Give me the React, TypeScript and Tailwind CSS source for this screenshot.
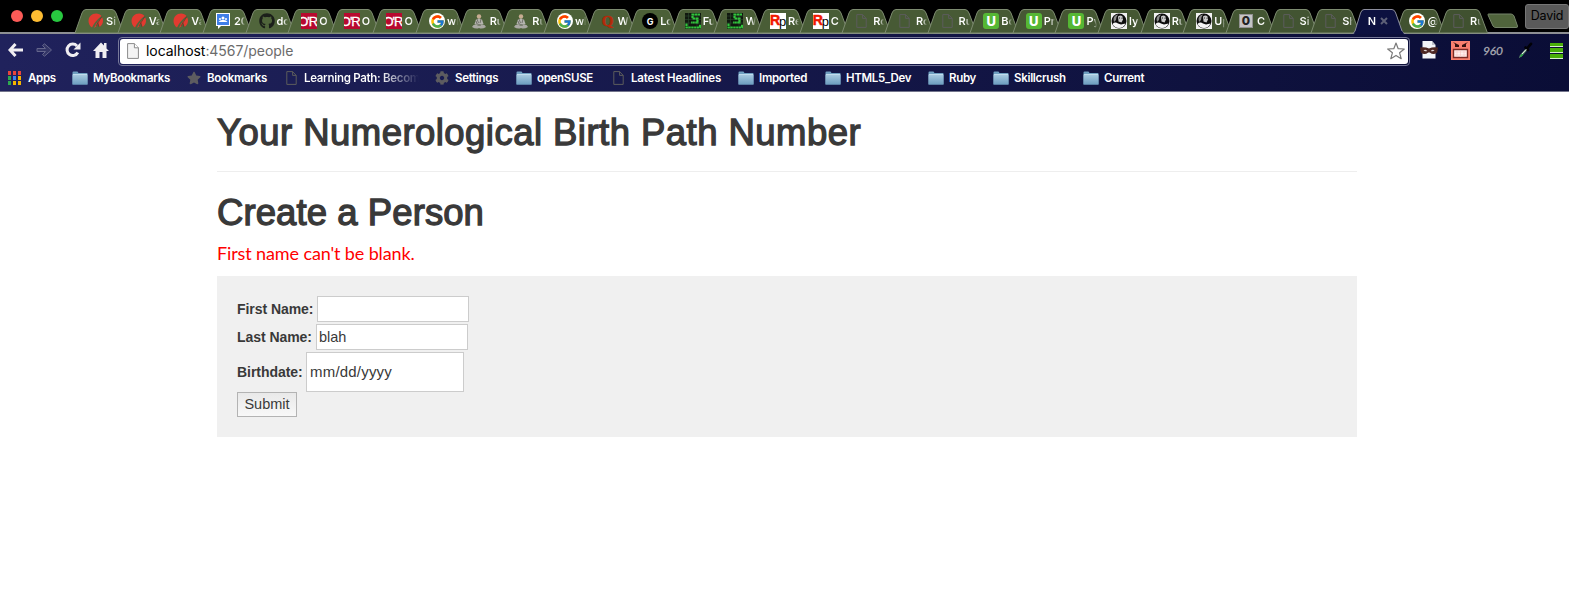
import type { ReactNode } from "react";
import { FcGoogle } from "react-icons/fc";
import { FaGithub, FaStar, FaCog } from "react-icons/fa";

function PageIcon({ light = false }: { light?: boolean }) {
  return light ? (
    <svg width="12" height="16" viewBox="0 0 12 16" className="block">
      <path d="M.6.6H7.4L11.4 4.8V15.4H.6Z" fill="#f4f4f4" stroke="#8a8a8a" />
      <path d="M7.4.6V4.8H11.4" fill="#fff" stroke="#8a8a8a" />
    </svg>
  ) : (
    <svg width="11" height="14" viewBox="0 0 11 14" className="block">
      <path d="M.8.6H6.6L10.2 4.4V13.4H.8ZM6.6.6V4.4H10.2" fill="none" stroke="#5c5c5c" />
    </svg>
  );
}

function Rails() {
  return (
    <svg width="16" height="16" viewBox="0 0 16 16" className="block">
      <path d="M4 14.5C-1.5 10.500 0 3 5 1C8.500-.3 12 .7 13.500 3C9.500 6 6 10 4 14.500Z" fill="#e23b30" />
      <path d="M6 15C8 10 11 6.500 14.300 4.500C16 8.500 14.500 12 11.500 14C11 11.500 10.500 10.500 10 10C9.500 12 8 14 6 15Z" fill="#e23b30" />
      <path d="M8 13L13.800 3.500M9.500 9.500L11 14" stroke="#6b3a28" strokeWidth=".8" fill="none" />
    </svg>
  );
}

function Classroom() {
  return (
    <svg width="14" height="16" viewBox="0 0 14 16" className="block">
      <path d="M0 0H14V13H5L2 16V13H0Z" fill="#fff" />
      <path d="M1 1H13V12H1Z" fill="#3f7fe8" />
      <circle cx="7" cy="5" r="1.500" fill="#fff" />
      <circle cx="4" cy="6" r="1" fill="#fff" />
      <circle cx="10" cy="6" r="1" fill="#fff" />
      <path d="M2.500 9Q4 6.500 7 7Q10 6.500 11.500 9Z" fill="#fff" />
    </svg>
  );
}

function OReilly() {
  return (
    <div className="flex h-4 w-4 shrink-0 items-center justify-end overflow-hidden bg-[#b8092f] font-['Liberation_Sans',sans-serif] text-[13px] leading-none tracking-[-1px] text-white [-webkit-text-stroke:0.3px_#fff]">
      O'R
    </div>
  );
}

function Google() {
  return (
    <div className="flex h-4 w-4 items-center justify-center rounded-full bg-white">
      <FcGoogle size={15} />
    </div>
  );
}

function Monk() {
  return (
    <svg width="14" height="15" viewBox="0 0 14 15" className="block">
      <circle cx="7" cy="2.500" r="2.200" fill="#c7ac91" />
      <path d="M4 5.500L7 4.500L10 5.500L11.500 10L7 11.500L2.500 10Z" fill="#b4b4ae" />
      <path d="M0 13Q1 10 4 10.500L7 12L10 10.500Q13 10 14 13Q10 15.500 7 14Q4 15.500 0 13Z" fill="#aaa9a4" />
      <path d="M5 5L6.500 9M9 5L8 9M4 7L5 10L9 11" stroke="#62625c" strokeWidth=".8" fill="none" />
    </svg>
  );
}

function Quora() {
  return <div className="w-4 text-center font-['Liberation_Serif',serif] text-[15px] font-bold leading-4 text-[#b42a0a] [-webkit-text-stroke:0.5px_#b42a0a]">Q</div>;
}

function BlackG() {
  return (
    <div className="flex h-4 w-4 items-center justify-center rounded-full bg-black text-[9px] font-bold leading-none text-white">G</div>
  );
}

function Maze() {
  return (
    <svg width="16" height="16" viewBox="0 0 16 16" className="block">
      <path d="M0 0H16V16H0Z" fill="#10180f" />
      <path d="M0 3H16M0 6.500H16M0 10H16M3.500 0V16M12 0V16" stroke="#2b4b2f" strokeWidth=".6" />
      <path d="M15 1.500H7.500V5.500H12.500V9.500H6M1.500 10.500V14.500H15V11.500" fill="none" stroke="#31c53c" strokeWidth="2.200" strokeDasharray="2.500 .4" />
    </svg>
  );
}

function Rp() {
  return (
    <div className="flex h-4 w-4 shrink-0 items-center bg-white font-['Liberation_Sans',sans-serif] text-[14px] leading-none text-black">
      <span className="-mt-[2px] w-[9px] font-bold tracking-[-1px] text-[#f01800] [-webkit-text-stroke:0.5px_#f01800]">R</span>
      <span className="mt-[1px] w-[7px] text-[13px]">p</span>
    </div>
  );
}

function Udemy() {
  return (
    <div className="flex h-4 w-4 items-center justify-center rounded-[3px] bg-[#55b734] text-[13px] font-extrabold leading-none text-white">U</div>
  );
}

function Portrait() {
  return (
    <svg width="16" height="16" viewBox="0 0 16 16" className="block">
      <path d="M0 0H16V16H0Z" fill="#f1f1f1" />
      <circle cx="8" cy="8" r="7.500" fill="#0c0c0c" />
      <path d="M2.500 6Q3 2 7 1.500L5.500 4L5 7L3 9Z" fill="#8b8b8b" />
      <path d="M7 3.500Q9.500 1.500 11.500 3.500L12 6.500L10.500 9.500L7.500 8.500Z" fill="#c9c9c9" />
      <path d="M1.500 11Q4 8.500 7 10.500L10 11.500L14.500 10.500Q12.500 15 8 15Q3.500 15 1.500 11Z" fill="#f5f5f5" />
      <path d="M8 5H9M10.500 5.200H11.500" stroke="#222" strokeWidth="1" />
    </svg>
  );
}

function Zero() {
  return (
    <div className="flex h-[14px] w-[14px] items-center justify-center border border-[#929292] bg-[#c4c4c4] text-[12px] font-extrabold leading-none text-[#222]">0</div>
  );
}

const page = (
  <span className="ml-px">
    <PageIcon />
  </span>
);

const tabs: { icon: ReactNode; label: string; active?: boolean }[] = [
  { icon: <Rails />, label: "Si" },
  { icon: <Rails />, label: "Va" },
  { icon: <Rails />, label: "Va" },
  { icon: <Classroom />, label: "20" },
  { icon: <FaGithub size={16} color="#1b1f1a" />, label: "do" },
  { icon: <OReilly />, label: "O" },
  { icon: <OReilly />, label: "O" },
  { icon: <OReilly />, label: "O" },
  { icon: <Google />, label: "wh" },
  { icon: <Monk />, label: "Ru" },
  { icon: <Monk />, label: "Ru" },
  { icon: <Google />, label: "wh" },
  { icon: <Quora />, label: "W" },
  { icon: <BlackG />, label: "Lo" },
  { icon: <Maze />, label: "Fu" },
  { icon: <Maze />, label: "W" },
  { icon: <Rp />, label: "Re" },
  { icon: <Rp />, label: "C" },
  { icon: page, label: "Ro" },
  { icon: page, label: "Ro" },
  { icon: page, label: "Ru" },
  { icon: <Udemy />, label: "Bo" },
  { icon: <Udemy />, label: "Pr" },
  { icon: <Udemy />, label: "Py" },
  { icon: <Portrait />, label: "ly" },
  { icon: <Portrait />, label: "Ru" },
  { icon: <Portrait />, label: "Up" },
  { icon: <Zero />, label: "C" },
  { icon: page, label: "Si" },
  { icon: page, label: "Sh" },
  { icon: null, label: "N", active: true },
  { icon: <Google />, label: "@" },
  { icon: page, label: "Ru" },
];

function Tab({ icon, label, active, shade }: { icon: ReactNode; label: string; active?: boolean; shade: number }) {
  const fill = active ? "#0d1140" : `rgb(${Math.round(82 - shade * 18)},${Math.round(104 - shade * 23)},${Math.round(60 - shade * 12)})`;
  return (
    <div className={active ? "relative z-10 -mr-[8.38px] h-[25px] w-[51px] shrink-0" : "relative -mr-[8.38px] h-[25px] w-[51px] shrink-0"}>
      <svg width="53" height="25" viewBox="0 0 53 25" className="absolute -left-px top-0">
        <path
          d={active ? "M-2 24.500H0Q1 24 2 22L7.500 4Q8.700.500 11 .500H39Q41.500.500 42.700 4L49 22Q49.700 24 51 24.500H54V25H-2Z" : "M1 24L8 4Q9.300.500 12 .500H38Q40.500.500 42 4L49.500 24Z"}
          fill={fill}
          stroke={active ? "#8b8d9c" : "#7d8b70"}
          strokeWidth="1"
        />
        {active && <path d="M1 25L3 22H49L51 25Z" fill={fill} />}
      </svg>
      <div className={active ? "relative flex h-full items-center pb-[1px] pl-[14px]" : "relative flex h-full items-center pb-[1px] pl-[13px]"}>
        {active ? null : <div className="flex w-[18px] shrink-0 items-center">{icon}</div>}
        <span className="w-[11px] shrink-0 whitespace-nowrap bg-linear-to-r from-white from-60% to-transparent bg-clip-text text-[11px] font-semibold leading-4 text-transparent">{label}</span>
        {active && (
          <svg width="8" height="8" viewBox="0 0 8 8" className="ml-px">
            <path d="M1 1L7 7M7 1L1 7" stroke="#5e6077" strokeWidth="2" />
          </svg>
        )}
      </div>
    </div>
  );
}

function Folder() {
  return (
    <svg width="16" height="14" viewBox="0 0 16 14" className="block">
      <path d="M.5 3V1.500Q.5.500 1.500.500H5.500L6.500 2H15Q15.500 2 15.500 3V13.500H.5Z" fill="#6f9fc0" />
      <path d="M.5 3.500H15.500V13.500H.5Z" fill="url(#folder)" />
      <path d="M1 3.500H15" stroke="#c0dcec" />
      <defs>
        <linearGradient id="folder" x1="0" y1="0" x2="0" y2="1">
          <stop offset="0" stopColor="#a9cbe0" />
          <stop offset="1" stopColor="#6c9cbf" />
        </linearGradient>
      </defs>
    </svg>
  );
}

function AppsGrid() {
  const colors = ["#e8453c", "#e8453c", "#e8453c", "#2da94f", "#3c82f0", "#f5b400", "#2da94f", "#f5b400", "#f5b400"];
  return (
    <div className="grid w-[13px] grid-cols-3 gap-x-[2px] gap-y-[1px]">
      {colors.map((c, i) => (
        <div key={i} className="h-[4px]" style={{ backgroundColor: c }} />
      ))}
    </div>
  );
}

const bookmarks: { icon: ReactNode; label: string; width: string; slot: string; text: string }[] = [
  { icon: <AppsGrid />, label: "Apps", width: "w-[64px]", slot: "w-[20px]", text: "" },
  { icon: <Folder />, label: "MyBookmarks", width: "w-[115px]", slot: "w-[21px]", text: "" },
  { icon: <FaStar size={14} color="#5d5c60" />, label: "Bookmarks", width: "w-[99px]", slot: "w-[20px]", text: "" },
  {
    icon: <PageIcon />,
    label: "Learning Path: Becom",
    width: "w-[149px]",
    slot: "w-[18px]",
    text: "w-[115px] bg-linear-to-r from-white from-66% to-transparent bg-clip-text text-transparent",
  },
  { icon: <FaCog size={14} color="#5d5c60" />, label: "Settings", width: "w-[81px]", slot: "w-[20px]", text: "" },
  { icon: <Folder />, label: "openSUSE", width: "w-[97px]", slot: "w-[21px]", text: "" },
  { icon: <PageIcon />, label: "Latest Headlines", width: "w-[125px]", slot: "w-[18px]", text: "tracking-[-0.15px]" },
  { icon: <Folder />, label: "Imported", width: "w-[87px]", slot: "w-[21px]", text: "" },
  { icon: <Folder />, label: "HTML5_Dev", width: "w-[103px]", slot: "w-[21px]", text: "" },
  { icon: <Folder />, label: "Ruby", width: "w-[65px]", slot: "w-[21px]", text: "" },
  { icon: <Folder />, label: "Skillcrush", width: "w-[90px]", slot: "w-[21px]", text: "" },
  { icon: <Folder />, label: "Current", width: "w-[80px]", slot: "w-[21px]", text: "" },
];

function NavIcons() {
  return (
    <div className="flex items-center pl-2">
      <svg width="16" height="14" viewBox="0 0 16 14">
        <path d="M7.500 1L2 7L7.500 13M2.500 7H15" fill="none" stroke="#f0eef2" strokeWidth="3" />
      </svg>
      <svg width="17" height="14" viewBox="0 0 17 14" className="ml-[12px]">
        <path d="M1 5.500H9.500L6.500 2.500L8.500 .8L15.500 7L8.500 13.200L6.500 11.500L9.500 8.500H1Z" fill="#343667" stroke="#64668c" />
      </svg>
      <svg width="16" height="16" viewBox="0 0 16 16" className="ml-[12px]">
        <path d="M12.800 10.500A5.700 5.700 0 1 1 12 4" fill="none" stroke="#f0eef2" strokeWidth="3" />
        <path d="M15.500 .5V7.500H8.500Z" fill="#f0eef2" />
      </svg>
      <svg width="16" height="16" viewBox="0 0 16 16" className="ml-[12px]">
        <path d="M0 9L8 .5L11 3.500V1H13.500V6.500L16 9H13.500V16H9.500V10H6.500V16H2.500V9Z" fill="#f0eef2" />
      </svg>
    </div>
  );
}

function Extensions() {
  return (
    <div className="flex h-full items-center">
      <svg width="18" height="18" viewBox="0 0 18 18" className="ml-[10px]">
        <path d="M2.500 0H12L15.500 4V17.500H2.500Z" fill="#f3f4f8" />
        <path d="M12 0V4H15.500Z" fill="#bfc1ca" />
        <path d="M0 6.500Q5 5.500 9 7.500Q13 5.500 18 6.500L17.200 11.500Q13.500 14.500 9.800 11.500H8.200Q4.500 14.500 .8 11.500Z" fill="#4c2622" />
        <path d="M3.500 9.300Q5.500 8 7.200 9.900Q5 11 3.500 9.300ZM10.800 9.900Q12.500 8 14.500 9.300Q13 11 10.800 9.900Z" fill="#dfd5d5" />
      </svg>
      <svg width="19" height="19" viewBox="0 0 19 19" className="ml-[13px]">
        <path d="M0 0H19V19H0Z" fill="#f9806f" />
        <path d="M2 1L8 4V6H4V3ZM17 1L11 4V6H15V3Z" fill="#35120f" />
        <path d="M2.500 8.500H16.500V16.500H2.500Z" fill="#fff0ef" stroke="#7b2a25" strokeWidth="1.400" />
        <path d="M3.500 11H16M3.500 14H16M6 9.500V16M9.500 9.500V16M13 9.500V16" stroke="#f6c4c0" strokeWidth=".6" />
      </svg>
      <span className="ml-[13px] mt-[2px] w-[20px] font-['Lato',sans-serif] text-[12px] italic leading-none tracking-[-0.2px] text-[#a9aab2] [-webkit-text-stroke:0.3px_#a9aab2]">960</span>
      <svg width="15" height="17" viewBox="0 0 15 17" className="ml-[15px]">
        <path d="M.8 16.200L2 13L8 6.500L9.500 8L3.500 14.500Z" fill="#5f8a6a" />
        <path d="M2.500 14.500L5 12" stroke="#2dad49" strokeWidth="1.200" />
        <path d="M7.500 5.500L10 8M9.500 6L13 1.800" stroke="#010107" strokeWidth="2.600" strokeLinecap="round" />
        <path d="M4 12L8.300 7.300" stroke="#eee" strokeWidth="1" />
      </svg>
      <div className="ml-[17px] mt-[2px] flex w-[13px] flex-col gap-px">
        <div className="h-[4px] border-b border-[#d8f2ce] bg-[#49ad09]" />
        <div className="h-[5px] border-b border-[#d8f2ce] bg-[#49ad09]" />
        <div className="h-[5px] border-b border-[#d8f2ce] bg-[#49ad09]" />
      </div>
    </div>
  );
}

function Browser() {
  return (
    <header className="font-['Inter',sans-serif]">
      <div className="flex h-[34px] border-b-2 border-[#8d8f93] bg-black">
        <div className="flex h-8 w-[75px] shrink-0 items-center gap-2 pl-[11px]">
          <span className="h-3 w-3 rounded-full bg-[#fc5b57]" />
          <span className="h-3 w-3 rounded-full bg-[#fdbc32]" />
          <span className="h-3 w-3 rounded-full bg-[#28c840]" />
        </div>
        <div className="mt-[9px] flex h-[25px]">
          {tabs.map((t, i) => (
            <Tab key={i} {...t} shade={i / 32} />
          ))}
        </div>
        <svg width="32" height="16" viewBox="0 0 32 16" className="ml-[5px] mt-[13px] shrink-0">
          <path d="M1.500 1H24Q26 1 27 3L30.500 13Q31 14.500 29 14.500H9Q7 14.500 6 13L1 2Q.7 1 1.500 1Z" fill="#50643c" stroke="#75846a" />
        </svg>
        <button className="ml-auto mt-1 flex h-[25px] w-[44px] shrink-0 items-center justify-center rounded-[3px] border border-[#777] bg-[#5a5a5a] text-[12.500px] leading-none tracking-[-0.2px] text-black">
          David
        </button>
      </div>
      <div className="h-[58px] border-b border-[#73758c] bg-linear-to-r from-[#20225c] to-[#0a0d36]">
        <div className="flex h-[32px] items-center">
          <div className="flex w-[118px] shrink-0 items-center">
            <NavIcons />
          </div>
          <div className="mt-[2px] flex h-[29px] w-[1292px] shrink-0 items-center rounded-[4px] border border-[#77799a] p-px">
            <div className="flex h-full w-full items-center rounded-[3px] bg-white pl-[7px] pr-[3px]">
              <PageIcon light />
              <span className="ml-[7px] text-[14px] leading-none tracking-[-0.05px] text-[#6b6b6b]">
                <span className="text-black">localhost</span>:4567/people
              </span>
              <svg width="18" height="18" viewBox="0 0 18 18" className="ml-auto">
                <path d="M9 1L11.200 6.700L17.300 7L12.600 10.800L14.200 16.700L9 13.400L3.800 16.700L5.400 10.800L.7 7L6.800 6.700Z" fill="#fff" stroke="#7a7a7a" strokeWidth="1.200" strokeLinejoin="round" />
              </svg>
            </div>
          </div>
          <Extensions />
        </div>
        <nav className="flex h-[24px] items-center pl-2 text-[11.500px] font-semibold leading-4 tracking-[-0.3px] text-white">
          {bookmarks.map((b) => (
            <div key={b.label} className={`flex shrink-0 items-center ${b.width}`}>
              <span className={`flex shrink-0 ${b.slot}`}>{b.icon}</span>
              <span className={`whitespace-nowrap ${b.text}`}>{b.label}</span>
            </div>
          ))}
        </nav>
      </div>
    </header>
  );
}

export default function App() {
  return (
    <div className="h-[608px] w-[1569px] overflow-hidden bg-white">
      <Browser />
      <main className="ml-[217px] w-[1140px] font-['Liberation_Sans',sans-serif] text-[#393939]">
        <h1 className="h-[80px] border-b border-[#eeeeee] pt-[20px] text-[36.500px] leading-[42px] tracking-[0.46px] [-webkit-text-stroke:1.3px_#393939]">
          Your Numerological Birth Path Number
        </h1>
        <h1 className="mt-[20px] text-[36.500px] leading-[42px] tracking-[0.08px] [-webkit-text-stroke:1.3px_#393939]">Create a Person</h1>
        <p className="mt-[6px] h-[36px] font-['Lato',sans-serif] text-[18px] leading-[26px] tracking-[-0.12px] text-[#ff0000]">First name can't be blank.</p>
        <form className="flex h-[161px] flex-col items-start bg-[#f0f0f0] pl-5 pt-5 text-[15px] leading-[18px]">
          <div className="flex h-[28px] items-start">
            <label className="w-[80px] pt-[4px] text-[14px] font-bold tracking-[-0.05px]">First Name:</label>
            <input type="text" className="h-[26px] w-[152px] border border-[#cccccc] bg-white px-[2px]" />
          </div>
          <div className="flex h-[28px] items-start">
            <label className="w-[79px] pt-[4px] text-[14px] font-bold tracking-[-0.05px]">Last Name:</label>
            <input type="text" defaultValue="blah" className="h-[26px] w-[152px] border border-[#cccccc] bg-white px-[2px] text-[14.500px]" />
          </div>
          <div className="flex h-[40px] items-center">
            <label className="w-[69px] text-[14px] font-bold tracking-[-0.05px]">Birthdate:</label>
            <input type="text" defaultValue="mm/dd/yyyy" className="h-[40px] w-[158px] border border-[#cccccc] bg-white px-[3px] pb-[2px] tracking-[0.2px]" />
          </div>
          <button type="button" className="h-[25px] w-[60px] border border-[#b3b3b3] bg-linear-to-b from-[#e9e9e9] to-[#f8f8f8] text-[14.500px] leading-none">
            Submit
          </button>
        </form>
      </main>
    </div>
  );
}
